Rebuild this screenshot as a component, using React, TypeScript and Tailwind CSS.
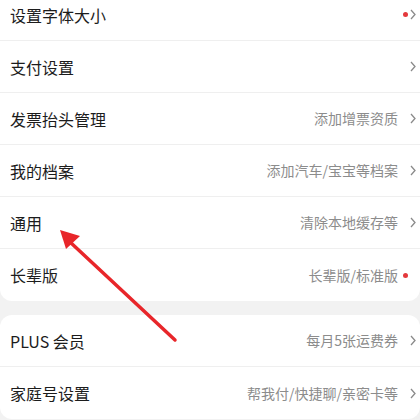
import React from "react";

type Row = {
  title: string;
  hint?: string;
  dot?: boolean;
  chevron?: boolean;
};

const groupOne: Row[] = [
  { title: "设置字体大小", dot: true, chevron: true },
  { title: "支付设置", chevron: true },
  { title: "发票抬头管理", hint: "添加增票资质", chevron: true },
  { title: "我的档案", hint: "添加汽车/宝宝等档案", chevron: true },
  { title: "通用", hint: "清除本地缓存等", chevron: true },
  { title: "长辈版", hint: "长辈版/标准版", dot: true },
];

const groupTwo: Row[] = [
  { title: "PLUS 会员", hint: "每月5张运费券", chevron: true },
  { title: "家庭号设置", hint: "帮我付/快捷聊/亲密卡等", chevron: true },
];

function Chevron() {
  return (
    <svg width="6" height="11" viewBox="0 0 6 11" className="shrink-0">
      <path d="M1 1 L5 5.5 L1 10" fill="none" stroke="#8a8a8a" strokeWidth="1.3" />
    </svg>
  );
}

function SettingRow({ row, last }: { row: Row; last: boolean }) {
  return (
    <div
      className={
        "flex h-[52px] items-center pl-[10px] pr-[4px] " +
        (last ? "" : "border-b border-[#efefef]")
      }
    >
      <span className="flex-1 text-[16px] text-[#1c1c1c]">{row.title}</span>
      {row.hint ? (
        <span className="text-[14px] text-[#8c8c8c]">{row.hint}</span>
      ) : null}
      <div className="ml-[5px] flex w-[13px] items-center justify-between">
        <span className={"h-[5px] w-[5px] shrink-0 rounded-full " + (row.dot ? "bg-[#e4393c]" : "")} />
        {row.chevron ? <Chevron /> : null}
      </div>
    </div>
  );
}

function Group({ rows }: { rows: Row[] }) {
  return (
    <div className="rounded-[12px] bg-white">
      {rows.map((row, i) => (
        <SettingRow key={row.title} row={row} last={i === rows.length - 1} />
      ))}
    </div>
  );
}

export default function App() {
  return (
    <div
      className="relative h-[420px] w-[420px] overflow-hidden bg-[#f2f2f2]"
      style={{ fontFamily: '"Noto Sans CJK SC", "Noto Sans", sans-serif' }}
    >
      <div className="mt-[-11px] flex flex-col gap-[14px]">
        <Group rows={groupOne} />
        <Group rows={groupTwo} />
      </div>

      <svg
        width="420"
        height="420"
        viewBox="0 0 420 420"
        className="pointer-events-none absolute left-0 top-0"
      >
        <line x1="175" y1="340" x2="70" y2="242" stroke="#e8262a" strokeWidth="3.5" strokeLinecap="round" />
        <path d="M60 230 L80 236 L66 249 Z" fill="#e8262a" />
      </svg>
    </div>
  );
}
